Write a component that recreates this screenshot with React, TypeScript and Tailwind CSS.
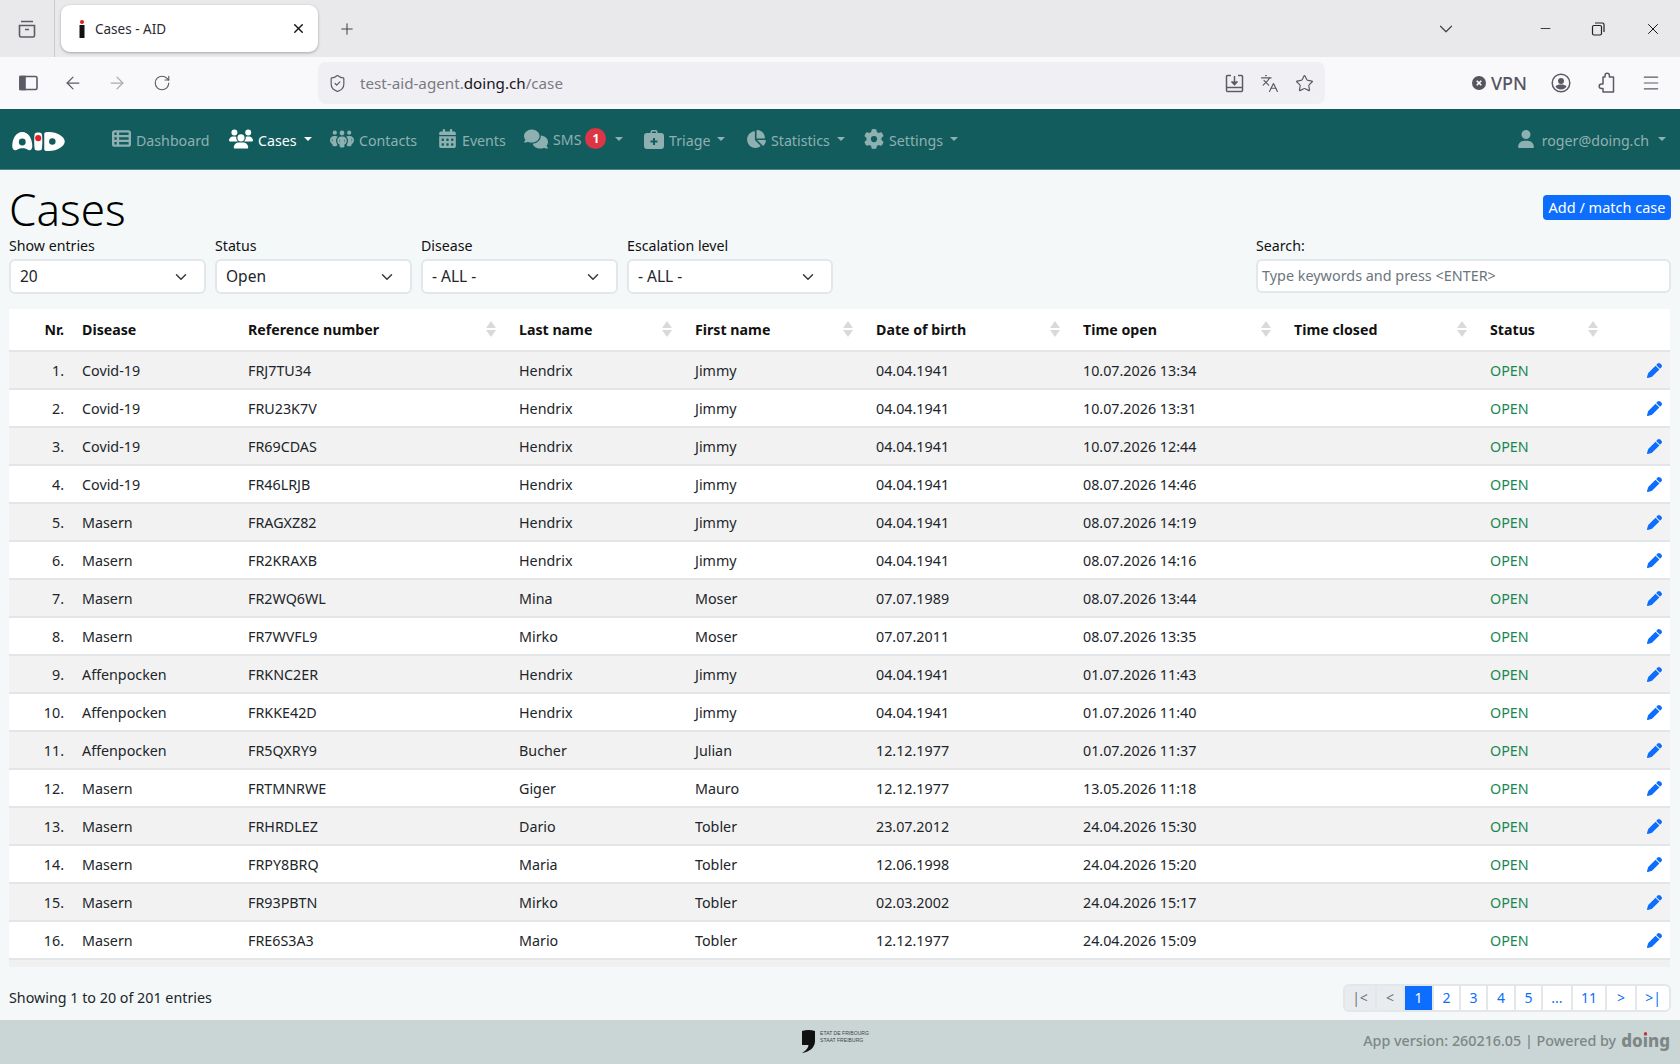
import React from "react";
import { FaUsers, FaCalendarDays, FaComments, FaChartPie, FaGear, FaUser, FaPen, FaPeopleGroup, FaTableList } from "react-icons/fa6";
import { ArrowLeft, ArrowRight, RotateCw, ShieldCheck, Languages, Star, Menu, ChevronDown, X, Plus, Minus } from "lucide-react";

const rows = [
  ["Covid-19","FRJ7TU34","Hendrix","Jimmy","04.04.1941","10.07.2026 13:34"],
  ["Covid-19","FRU23K7V","Hendrix","Jimmy","04.04.1941","10.07.2026 13:31"],
  ["Covid-19","FR69CDAS","Hendrix","Jimmy","04.04.1941","10.07.2026 12:44"],
  ["Covid-19","FR46LRJB","Hendrix","Jimmy","04.04.1941","08.07.2026 14:46"],
  ["Masern","FRAGXZ82","Hendrix","Jimmy","04.04.1941","08.07.2026 14:19"],
  ["Masern","FR2KRAXB","Hendrix","Jimmy","04.04.1941","08.07.2026 14:16"],
  ["Masern","FR2WQ6WL","Mina","Moser","07.07.1989","08.07.2026 13:44"],
  ["Masern","FR7WVFL9","Mirko","Moser","07.07.2011","08.07.2026 13:35"],
  ["Affenpocken","FRKNC2ER","Hendrix","Jimmy","04.04.1941","01.07.2026 11:43"],
  ["Affenpocken","FRKKE42D","Hendrix","Jimmy","04.04.1941","01.07.2026 11:40"],
  ["Affenpocken","FR5QXRY9","Bucher","Julian","12.12.1977","01.07.2026 11:37"],
  ["Masern","FRTMNRWE","Giger","Mauro","12.12.1977","13.05.2026 11:18"],
  ["Masern","FRHRDLEZ","Dario","Tobler","23.07.2012","24.04.2026 15:30"],
  ["Masern","FRPY8BRQ","Maria","Tobler","12.06.1998","24.04.2026 15:20"],
  ["Masern","FR93PBTN","Mirko","Tobler","02.03.2002","24.04.2026 15:17"],
  ["Masern","FRE6S3A3","Mario","Tobler","12.12.1977","24.04.2026 15:09"],
];

const Caret = ({ c = "border-t-[#8fb0b1]" }: { c?: string }) => (
  <span className={`inline-block w-0 h-0 border-x-[4.5px] border-x-transparent border-t-[4.5px] ${c}`} />
);

function NavItem({ w, icon, label, active, caret, badge }: { w: string; icon: React.ReactNode; label: string; active?: boolean; caret?: boolean; badge?: boolean }) {
  return (
    <div className={`flex items-center shrink-0 ${w} ${active ? "text-white" : "text-[#8fb0b1]"}`}>
      {icon}
      <span className={`ml-[5px] ${badge ? "mt-[1px]" : "mt-[3px]"}`}>{label}</span>
      {badge && <span className="ml-[4px] w-[21px] h-[21px] rounded-full bg-[#dc3545] text-white text-[12px] font-bold flex items-center justify-center">1</span>}
      {caret && <span className={`flex ${badge ? "ml-[9px]" : "ml-[7px]"}`}><Caret c={active ? "border-t-white" : "border-t-[#8fb0b1]"} /></span>}
    </div>
  );
}

function Sel({ label, value, w }: { label: string; value: string; w: string }) {
  return (
    <div className={`${w} shrink-0`}>
      <div className="text-[14.2px] leading-[20px] h-[20px] text-[#111]">{label}</div>
      <div className="mt-[3px] h-[35px] rounded-[6px] border-2 border-[#e2e7ea] bg-white flex items-center justify-between pl-[9px] pr-[14px] text-[15.5px] text-[#212529]">
        <span>{value}</span>
        <ChevronDown size={18} strokeWidth={2} className="text-[#343a40]" />
      </div>
    </div>
  );
}

const Th = ({ children, sort }: { children?: React.ReactNode; sort?: boolean }) => (
  <th className="relative px-2 text-left font-bold text-[#111] text-[14.2px] border-b-2 border-[#e3e6e8]">
    {children}
    {sort && (
      <span className="absolute right-[15px] top-[12px] flex flex-col gap-[2px]">
        <span className="w-0 h-0 border-x-[5px] border-x-transparent border-b-[7px] border-b-[#d9d9d9]" />
        <span className="w-0 h-0 border-x-[5px] border-x-transparent border-t-[7px] border-t-[#d9d9d9]" />
      </span>
    )}
  </th>
);

function PageBtn({ w, children, kind }: { w: string; children: React.ReactNode; kind?: "off" | "on" }) {
  const cls = kind === "on" ? "bg-[#0d6efd] text-white" : kind === "off" ? "bg-[#e9ecef] text-[#6c757d]" : "bg-white text-[#0d6efd]";
  return <div className={`${w} h-full flex items-center justify-center border-r-2 border-[#e3e7ea] last:border-r-0 ${cls}`}>{children}</div>;
}

export default function App() {
  const navIcon = "text-[19px] shrink-0";
  return (
    <div className="w-[1680px] h-[1064px] overflow-hidden flex flex-col bg-[#f4f8f9] font-['Noto_Sans',sans-serif]">
      {/* tab strip */}
      <div className="h-[57px] bg-[#e9e9ec] flex items-center shrink-0 text-[#2b2a33]">
        <div className="w-[55px] h-full flex items-center justify-center border-r border-[#c9c9cd]">
          <svg width="20" height="20" viewBox="0 0 20 20" fill="none" stroke="#5b5b66" strokeWidth="1.6"><path d="M4 2.500h12M2.500 6.500h15v10a1.500 1.500 0 0 1-1.500 1.500H4a1.500 1.500 0 0 1-1.500-1.500zM8 10.500h4" /></svg>
        </div>
        <div className="ml-[6px] w-[257px] h-[47px] rounded-[9px] bg-white shadow-[0_1px_3px_rgba(0,0,0,0.3)] flex items-center pl-[16px] pr-[12px]">
          <svg width="10" height="20" viewBox="0 0 10 20"><circle cx="5" cy="3" r="2" fill="#e11d1d" /><rect x="2.500" y="6" width="5" height="13" fill="#111" /></svg>
          <span className="ml-[8px] mt-[1px] text-[13.5px]">Cases - AID</span>
          <X size={15} strokeWidth={2.2} className="ml-auto text-[#15141a]" />
        </div>
        <Plus size={18} strokeWidth={1.4} className="ml-[20px] text-[#444]" />
        <div className="ml-auto flex items-center">
          <ChevronDown size={22} strokeWidth={1.3} className="text-[#444] mr-[81px]" />
          <Minus size={15} strokeWidth={1.4} className="text-[#222] mr-[38px]" />
          <svg width="14" height="14" viewBox="0 0 14 14" fill="none" stroke="#222" strokeWidth="1.2" className="mr-[39px]"><rect x="1.500" y="3.500" width="9" height="9.500" rx="1.500" /><path d="M4 1h7.500a1.500 1.500 0 0 1 1.500 1.500V10" /></svg>
          <X size={18} strokeWidth={1.3} className="text-[#111] mr-[18px]" />
        </div>
      </div>
      {/* toolbar */}
      <div className="h-[52px] bg-[#f9f9fb] flex items-center shrink-0 text-[#5b5b66]">
        <svg width="20" height="16" viewBox="0 0 20 16" className="ml-[19px]" fill="none" stroke="#5b5b66" strokeWidth="1.6"><rect x="1" y="1.500" width="17" height="13" rx="1.500" /><rect x="1" y="1.500" width="5" height="13" fill="#5b5b66" /></svg>
        <ArrowLeft size={20} strokeWidth={1.5} className="ml-[24px]" />
        <ArrowRight size={20} strokeWidth={1.5} className="ml-[24px] text-[#a9a9b0]" />
        <RotateCw size={18} strokeWidth={1.5} className="ml-[26px]" />
        <div className="ml-[147px] w-[1007px] h-[42px] rounded-[8px] bg-[#f0f0f4] flex items-center pl-[10px] pr-[11px]">
          <ShieldCheck size={19} strokeWidth={1.5} />
          <span className="ml-[13px] text-[15.2px] text-[#7a7a82]">test-aid-agent.<span className="text-[#15141a]">doing.ch</span>/case</span>
          <div className="ml-auto flex items-center gap-[16px]">
            <svg width="19" height="19" viewBox="0 0 19 19" fill="none" stroke="#5b5b66" strokeWidth="1.500"><path d="M6 1.500H2.500a1 1 0 0 0-1 1v14a1 1 0 0 0 1 1h14a1 1 0 0 0 1-1v-14a1 1 0 0 0-1-1H13M1.500 13.500h16M9.500 2v8" /><path d="M6.500 7.500l3 3.200 3-3.200" fill="#5b5b66" /></svg>
            <Languages size={19} strokeWidth={1.5} />
            <Star size={19} strokeWidth={1.5} />
          </div>
        </div>
        <div className="ml-[147px] flex items-center">
          <svg width="14" height="14" viewBox="0 0 14 14"><circle cx="7" cy="7" r="7" fill="#55555f" /><path d="M4.700 4.700l4.600 4.600M9.300 4.700l-4.600 4.600" stroke="#fff" strokeWidth="1.600" /></svg>
          <span className="ml-[5px] text-[18px] font-medium text-[#55555f]">VPN</span>
        </div>
        <svg width="20" height="20" viewBox="0 0 20 20" className="ml-[24px]"><circle cx="10" cy="10" r="8.800" fill="none" stroke="#5b5b66" strokeWidth="1.500" /><circle cx="10" cy="8" r="3" fill="#5b5b66" /><path d="M4.500 13.500c1-1.500 3-2 5.500-2s4.500.5 5.500 2c-1 1.800-3 3-5.500 3s-4.500-1.200-5.500-3z" fill="#5b5b66" /></svg>
        <svg width="18" height="22" viewBox="0 0 18 22" fill="none" stroke="#5b5b66" strokeWidth="1.500" strokeLinejoin="round" className="ml-[26px]"><path d="M8 5V3.500a2.200 2.200 0 0 1 4.400 0V5h4.100v15H6v-3.500H4.500a2.300 2.300 0 0 1 0-4.600H6V5z" /></svg>
        <Menu size={20} strokeWidth={1.4} className="ml-[26px]" />
      </div>
      {/* navbar */}
      <nav className="h-[61px] bg-[#135c5e] border-b border-[#4d8485] shrink-0 flex items-center text-[14.2px]">
        <svg width="57" height="21" viewBox="0 0 57 22" className="ml-[10px] mt-[4px]">
          <path d="M1 16C1 8 5 1 11.500 1S22 8 22 16c0 4-3 5-5 3.500-2.500-1.800-8-1.800-10.500 0C4 21 1 20 1 16z" fill="#fff" />
          <circle cx="11.500" cy="11.500" r="3.600" fill="#135c5e" />
          <path d="M24.500 3c1.500-2 6-2 7.500 0 .7 5 .7 11 0 16-1.500 2-6 2-7.500 0-.7-5-.7-11 0-16z" fill="#fff" />
          <circle cx="28.200" cy="7.500" r="3.200" fill="#e11d2a" />
          <path d="M34.500 3c0-2 3-2 5-2C48 1 56 6 56 11s-8 10-16.500 10c-2 0-5 0-5-2z" fill="#fff" />
          <circle cx="43" cy="11" r="3.400" fill="#135c5e" />
        </svg>
        <div className="ml-[45px] flex items-center">
          <NavItem w="w-[117px]" icon={<FaTableList className={navIcon} />} label="Dashboard" />
          <NavItem w="w-[101px]" active caret icon={<FaUsers className="text-[24px] shrink-0" />} label="Cases" />
          <NavItem w="w-[108px]" icon={<FaPeopleGroup className="text-[24px] shrink-0" />} label="Contacts" />
          <NavItem w="w-[86px]" icon={<FaCalendarDays className={navIcon} />} label="Events" />
          <NavItem w="w-[120px]" caret badge icon={<FaComments className="text-[24px] shrink-0" />} label="SMS" />
          <NavItem w="w-[102px]" caret icon={
            <svg width="20" height="20" viewBox="0 0 20 20" className="shrink-0"><path fillRule="evenodd" d="M6.500 4V3a2 2 0 0 1 2-2h3a2 2 0 0 1 2 2v1H17a3 3 0 0 1 3 3v10a3 3 0 0 1-3 3H3a3 3 0 0 1-3-3V7a3 3 0 0 1 3-3zM8 4h4V3a.5.5 0 0 0-.5-.5h-3A.5.5 0 0 0 8 3zm1 5v2.500H6.500v2H9V16h2v-2.500h2.500v-2H11V9z" fill="#8fb0b1" /></svg>
          } label="Triage" />
          <NavItem w="w-[118px]" caret icon={<FaChartPie className="text-[20px] shrink-0" />} label="Statistics" />
          <NavItem w="w-[110px]" caret icon={<FaGear className="text-[20px] shrink-0" />} label="Settings" />
        </div>
        <div className="ml-auto mr-[14px] flex items-center text-[#8fb0b1]">
          <FaUser className="text-[18px]" />
          <span className="ml-[7px] mt-[3px]">roger@doing.ch</span>
          <span className="ml-[9px] flex"><Caret /></span>
        </div>
      </nav>
      {/* content */}
      <main className="flex-1 px-[9px] flex flex-col min-h-0">
        <div className="flex items-start justify-between h-[66px]">
          <h1 className="text-[44px] leading-[48px] mt-[15px] text-black font-light">Cases</h1>
          <button className="mt-[25px] h-[25px] w-[128px] rounded-[4px] bg-[#0d6efd] text-white text-[14.5px] flex items-center justify-center">Add / match case</button>
        </div>
        <div className="flex items-start">
          <Sel w="w-[197px]" label="Show entries" value="20" />
          <div className="w-[9px] shrink-0" />
          <Sel w="w-[197px]" label="Status" value="Open" />
          <div className="w-[9px] shrink-0" />
          <Sel w="w-[197px]" label="Disease" value="- ALL -" />
          <div className="w-[9px] shrink-0" />
          <Sel w="w-[206px]" label="Escalation level" value="- ALL -" />
          <div className="ml-auto w-[415px]">
            <div className="text-[14.2px] leading-[20px] h-[20px] text-[#111]">Search:</div>
            <div className="mt-[3px] h-[34px] rounded-[6px] border-2 border-[#e2e7ea] bg-white flex items-center px-[4px] text-[14.4px] text-[#6c757d]">Type keywords and press &lt;ENTER&gt;</div>
          </div>
        </div>
        <div className="mt-[15px] h-[658px] overflow-hidden shrink-0">
          <table className="w-[1661px] table-fixed border-collapse text-[14.3px] text-[#212529]">
            <colgroup>
              <col className="w-[65px]" /><col className="w-[166px]" /><col className="w-[271px]" /><col className="w-[176px]" /><col className="w-[181px]" /><col className="w-[207px]" /><col className="w-[211px]" /><col className="w-[196px]" /><col className="w-[131px]" /><col className="w-[57px]" />
            </colgroup>
            <thead>
              <tr className="h-[42px] bg-white">
                <th className="pl-2 pr-[10px] text-right font-bold text-[#111] text-[14.2px] border-b-2 border-[#e3e6e8]">Nr.</th>
                <Th>Disease</Th><Th sort>Reference number</Th><Th sort>Last name</Th><Th sort>First name</Th><Th sort>Date of birth</Th><Th sort>Time open</Th><Th sort>Time closed</Th><Th sort>Status</Th><Th />
              </tr>
            </thead>
            <tbody>
              {rows.map((r, i) => (
                <tr key={i} className={`h-[38px] border-b-2 border-[#e3e6e8] ${i % 2 === 0 ? "bg-[#f2f2f2]" : "bg-white"}`}>
                  <td className="pl-2 pr-[10px] pt-[2px] text-right">{i + 1}.</td>
                  {r.map((c, j) => <td key={j} className="px-2 pt-[2px] whitespace-nowrap">{c}</td>)}
                  <td className="px-2" />
                  <td className="px-2 pt-[2px] text-[#198754]">OPEN</td>
                  <td className="px-2"><FaPen className="text-[15px] text-[#0d6efd] ml-[26px]" /></td>
                </tr>
              ))}
              <tr className="h-[38px] bg-[#f0f0f0]"><td colSpan={10} /></tr>
            </tbody>
          </table>
        </div>
        <div className="flex items-center justify-between flex-1 pt-[8px] text-[14.3px] text-[#212529]">
          <span>Showing 1 to 20 of 201 entries</span>
          <div className="h-[28px] flex rounded-[6px] overflow-hidden border-2 border-[#e3e7ea] text-[14px]">
            <PageBtn w="w-[32px]" kind="off">|&lt;</PageBtn>
            <PageBtn w="w-[28px]" kind="off">&lt;</PageBtn>
            <PageBtn w="w-[29px]" kind="on">1</PageBtn>
            <PageBtn w="w-[27px]">2</PageBtn>
            <PageBtn w="w-[27px]">3</PageBtn>
            <PageBtn w="w-[28px]">4</PageBtn>
            <PageBtn w="w-[27px]">5</PageBtn>
            <PageBtn w="w-[30px]">...</PageBtn>
            <PageBtn w="w-[34px]">11</PageBtn>
            <PageBtn w="w-[30px]">&gt;</PageBtn>
            <PageBtn w="w-[32px]">&gt;|</PageBtn>
          </div>
        </div>
      </main>
      {/* footer */}
      <footer className="relative h-[44px] bg-[#c9d6d5] shrink-0 flex items-center justify-end pr-[10px] pb-[2px] text-[14.3px] font-medium text-[#7e8686]">
        <div className="absolute left-[802px] top-[9px] flex items-start">
          <svg width="13" height="25" viewBox="0 0 13 25"><path d="M0 2c4-1.500 9-1.500 13 0v10c0 6-5 11-13 12 3-2 6-4 6.500-8H0z" fill="#111" /></svg>
          <div className="ml-[5px] mt-[1px] text-[5.1px] leading-[7px] text-[#444] font-['Liberation_Sans',sans-serif]">ETAT DE FRIBOURG<br />STAAT FREIBURG</div>
        </div>
        <span>App version: 260216.05 | Powered by </span>
        <span className="relative ml-[5px] font-extrabold text-[17px]">doing<span className="absolute left-[23px] top-[4px] w-[3px] h-[3px] rounded-full bg-[#e11d2a]" /></span>
      </footer>
    </div>
  );
}
